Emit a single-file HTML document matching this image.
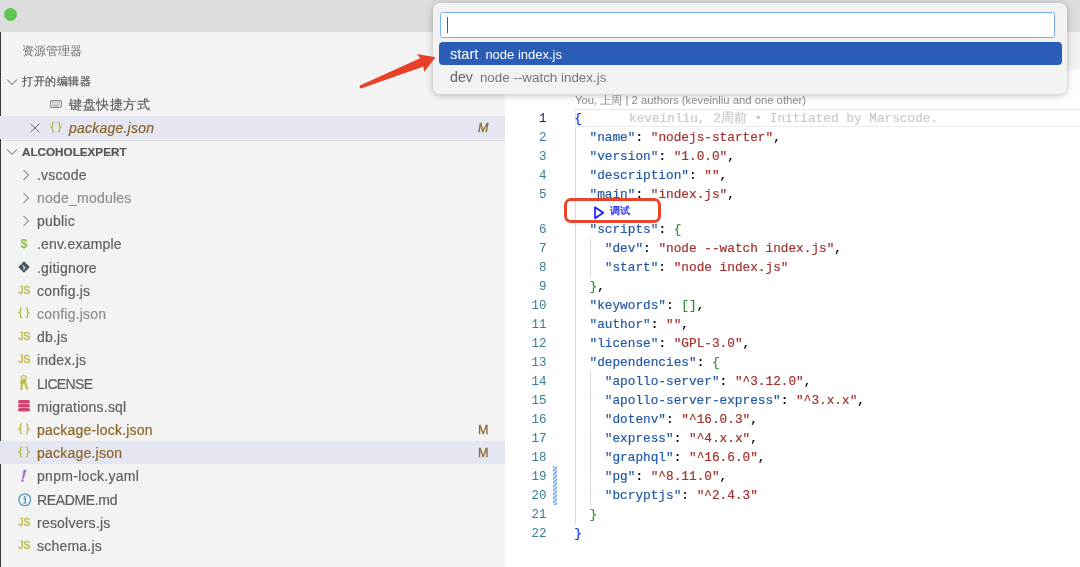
<!DOCTYPE html>
<html><head><meta charset="utf-8"><style>
*{margin:0;padding:0;box-sizing:border-box}
html,body{width:1080px;height:567px;overflow:hidden;background:#fff;font-family:"Liberation Sans",sans-serif;position:relative}
body{will-change:transform}
.a{position:absolute}
.row{position:absolute;left:0;width:505px;height:23.2px;line-height:23.2px;font-size:14px;color:#616161;white-space:nowrap;letter-spacing:0.22px;-webkit-text-stroke:0.2px currentColor}
.row .t{position:absolute;left:37px;top:1.4px}
.row .ic{position:absolute}
.sel{background:#e4e6f1}
.m{position:absolute;left:478px;top:1px;color:#8b6a35;font-style:italic;font-size:12.5px;-webkit-text-stroke:0.3px #8b6a35}
.cl{position:absolute;left:574.2px;height:19px;line-height:19px;padding-top:0.6px;font-family:"Liberation Mono",monospace;font-size:12.75px;white-space:pre;color:#000;-webkit-text-stroke:0.18px currentColor}
.ln{position:absolute;left:505px;width:41.5px;text-align:right;height:19px;line-height:19px;padding-top:1.5px;font-family:"Liberation Mono",monospace;font-size:12.5px;color:#3a7d96}
.k{color:#2158a6}.s{color:#a3302c}.b1{color:#0431fa}.b2{color:#319331}
.ig{position:absolute;width:1px;background:#d9d9d9}
</style></head><body>
<div class="a" style="left:0;top:0;width:1080px;height:32.3px;background:#dddddd"></div>
<div class="a" style="left:4px;top:8px;width:13px;height:13px;border-radius:50%;background:#61c554"></div>
<div class="a" style="left:0;top:32px;width:505px;height:535px;background:#f3f3f3"></div>
<div class="a" style="left:0;top:32px;width:1px;height:535px;background:#3a3a3a"></div>
<div class="a" style="left:505px;top:32px;width:575px;height:38px;background:#f3f3f3"></div>
<div class="a" style="left:22px;top:43px;font-size:11.5px;color:#6f6f6f;line-height:16px;white-space:nowrap">资源管理器</div>
<div class="row" style="top:69.7px;font-size:11px;color:#555;letter-spacing:0.55px;-webkit-text-stroke:0.2px #555"><span class="t" style="left:22px;top:0.6px">打开的编辑器</span></div>
<svg class="a" style="left:5.5px;top:77.5px" width="12" height="8" viewBox="0 0 12 8"><path d="M1 1.5 L6 6.5 L11 1.5" fill="none" stroke="#5a5a5a" stroke-width="1"/></svg>
<div class="row" style="top:92.9px;font-size:13px;letter-spacing:0.6px"><span class="t" style="left:69px;top:0.6px">键盘快捷方式</span></div>
<svg class="a" style="left:50px;top:100px" width="12" height="8" viewBox="0 0 12 8"><rect x="0.6" y="0.6" width="10.8" height="6.8" rx="1.2" fill="none" stroke="#8c8c8c" stroke-width="1.1"/><path d="M2.2 2.6h1.2M4.4 2.6h1.2M6.6 2.6h1.2M8.6 2.6h1.2M2.2 4.2h1.2M4.4 4.2h1.2M6.6 4.2h1.2M8.6 4.2h1.2M3.2 5.7h5.6" stroke="#9a9a9a" stroke-width="0.9"/></svg>
<div class="row sel" style="top:116.1px"><span class="t" style="left:69px;color:#8b6326;font-style:italic">package.json</span><span class="m">M</span></div>
<svg class="a" style="left:29.8px;top:122.8px" width="10" height="10" viewBox="0 0 10 10"><path d="M0.6 0.6 L9.4 9.4 M9.4 0.6 L0.6 9.4" stroke="#6a6a6a" stroke-width="1"/></svg>
<svg class="a" style="left:50px;top:121px" width="12" height="12" viewBox="0 0 12 12"><path d="M4.3 0.9 Q2.5 0.9 2.5 2.6 V4.7 L0.8 5.9 L2.5 7.1 V9.2 Q2.5 10.9 4.3 10.9 M7.7 0.9 Q9.5 0.9 9.5 2.6 V4.7 L11.2 5.9 L9.5 7.1 V9.2 Q9.5 10.9 7.7 10.9" fill="none" stroke="#bbbd4a" stroke-width="1.35" stroke-linejoin="round"/></svg>
<div class="a" style="left:1px;top:139.8px;width:504px;height:1px;background:#d9d9de"></div>
<div class="row" style="top:139.3px;font-size:11.7px;font-weight:bold;color:#555;letter-spacing:0"><span class="t" style="left:22px;top:1px">ALCOHOLEXPERT</span></div>
<svg class="a" style="left:5.5px;top:147.5px" width="12" height="8" viewBox="0 0 12 8"><path d="M1 1.5 L6 6.5 L11 1.5" fill="none" stroke="#5a5a5a" stroke-width="1"/></svg>
<div class="row" style="top:162.5px"><span class="t">.vscode</span></div>
<svg class="a" style="left:22px;top:168.8px" width="8" height="12" viewBox="0 0 8 12"><path d="M1.5 1 L6.5 6 L1.5 11" fill="none" stroke="#5a5a5a" stroke-width="1"/></svg>
<div class="row" style="top:185.7px"><span class="t" style="color:#8e8e8e">node_modules</span></div>
<svg class="a" style="left:22px;top:192.00000000000003px" width="8" height="12" viewBox="0 0 8 12"><path d="M1.5 1 L6.5 6 L1.5 11" fill="none" stroke="#5a5a5a" stroke-width="1"/></svg>
<div class="row" style="top:208.9px"><span class="t">public</span></div>
<svg class="a" style="left:22px;top:215.20000000000002px" width="8" height="12" viewBox="0 0 8 12"><path d="M1.5 1 L6.5 6 L1.5 11" fill="none" stroke="#5a5a5a" stroke-width="1"/></svg>
<div class="row" style="top:232.1px"><span class="t">.env.example</span></div>
<div class="a" style="left:20.5px;top:237.9px;font-size:12.5px;line-height:12px;color:#8dc149;font-weight:bold">$</div>
<div class="row" style="top:255.3px"><span class="t">.gitignore</span></div>
<svg class="a" style="left:18px;top:260.6px" width="12" height="12" viewBox="0 0 12 12"><path d="M6 0.3 L11.7 6 L6 11.7 L0.3 6 Z" fill="#41535b"/><path d="M4 3.5 L7.5 7 M6 5.5 V9" stroke="#f3f3f3" stroke-width="1"/></svg>
<div class="row" style="top:278.5px"><span class="t">config.js</span></div>
<div class="a" style="left:18.5px;top:285.8px;font-size:10px;line-height:10px;color:#b9b948;white-space:pre;letter-spacing:0.1px;-webkit-text-stroke:0.45px #b9b948">JS</div>
<div class="row" style="top:301.7px"><span class="t" style="color:#8e8e8e">config.json</span></div>
<svg class="a" style="left:18px;top:307.20000000000005px" width="12" height="12" viewBox="0 0 12 12"><path d="M4.3 0.9 Q2.5 0.9 2.5 2.6 V4.7 L0.8 5.9 L2.5 7.1 V9.2 Q2.5 10.9 4.3 10.9 M7.7 0.9 Q9.5 0.9 9.5 2.6 V4.7 L11.2 5.9 L9.5 7.1 V9.2 Q9.5 10.9 7.7 10.9" fill="none" stroke="#bbbd4a" stroke-width="1.35" stroke-linejoin="round"/></svg>
<div class="row" style="top:324.9px"><span class="t">db.js</span></div>
<div class="a" style="left:18.5px;top:332.2px;font-size:10px;line-height:10px;color:#b9b948;white-space:pre;letter-spacing:0.1px;-webkit-text-stroke:0.45px #b9b948">JS</div>
<div class="row" style="top:348.1px"><span class="t">index.js</span></div>
<div class="a" style="left:18.5px;top:355.40000000000003px;font-size:10px;line-height:10px;color:#b9b948;white-space:pre;letter-spacing:0.1px;-webkit-text-stroke:0.45px #b9b948">JS</div>
<div class="row" style="top:371.3px"><span class="t" style="letter-spacing:-0.65px">LICENSE</span></div>
<svg class="a" style="left:19px;top:374.8px" width="10" height="16" viewBox="0 0 10 16"><ellipse cx="4.8" cy="2.6" rx="2.5" ry="1.9" fill="none" stroke="#bcbd42" stroke-width="1.2"/><circle cx="3.2" cy="6.9" r="2.2" fill="#bcbd42"/><circle cx="5.6" cy="6.2" r="1.8" fill="#bcbd42"/><path d="M3 7.5 L2.4 14.2 M5.6 6.8 L8.1 13.4" fill="none" stroke="#bcbd42" stroke-width="2.1" stroke-linecap="round"/></svg>
<div class="row" style="top:394.5px"><span class="t">migrations.sql</span></div>
<svg class="a" style="left:18px;top:399.8px" width="12" height="12" viewBox="0 0 12 12"><rect x="0" y="0" width="12" height="3.6" rx="1.8" fill="#d6426e"/><rect x="0" y="4.1" width="12" height="3.4" rx="1.7" fill="#d6426e"/><rect x="0" y="8.1" width="12" height="3.5" rx="1.75" fill="#d6426e"/></svg>
<div class="row" style="top:417.7px"><span class="t" style="color:#8b6326">package-lock.json</span><span class="m" style="font-style:normal">M</span></div>
<svg class="a" style="left:18px;top:423.2px" width="12" height="12" viewBox="0 0 12 12"><path d="M4.3 0.9 Q2.5 0.9 2.5 2.6 V4.7 L0.8 5.9 L2.5 7.1 V9.2 Q2.5 10.9 4.3 10.9 M7.7 0.9 Q9.5 0.9 9.5 2.6 V4.7 L11.2 5.9 L9.5 7.1 V9.2 Q9.5 10.9 7.7 10.9" fill="none" stroke="#bbbd4a" stroke-width="1.35" stroke-linejoin="round"/></svg>
<div class="row sel" style="top:440.9px"><span class="t" style="color:#8b6326">package.json</span><span class="m" style="font-style:normal">M</span></div>
<svg class="a" style="left:18px;top:446.4px" width="12" height="12" viewBox="0 0 12 12"><path d="M4.3 0.9 Q2.5 0.9 2.5 2.6 V4.7 L0.8 5.9 L2.5 7.1 V9.2 Q2.5 10.9 4.3 10.9 M7.7 0.9 Q9.5 0.9 9.5 2.6 V4.7 L11.2 5.9 L9.5 7.1 V9.2 Q9.5 10.9 7.7 10.9" fill="none" stroke="#bbbd4a" stroke-width="1.35" stroke-linejoin="round"/></svg>
<div class="row" style="top:464.1px"><span class="t" style="letter-spacing:0.3px">pnpm-lock.yaml</span></div>
<svg class="a" style="left:20px;top:469.0px" width="8" height="14" viewBox="0 0 8 14"><path d="M3.7 1 L6.3 1 L3.6 9.5 L2.3 9.5 Z" fill="#a074c4" stroke="#a074c4" stroke-width="0.5" stroke-linejoin="round"/><circle cx="2.5" cy="11.6" r="1.3" fill="#a074c4"/></svg>
<div class="row" style="top:487.3px"><span class="t" style="letter-spacing:-0.35px">README.md</span></div>
<svg class="a" style="left:17.5px;top:492.8px" width="13.5" height="13.5" viewBox="0 0 14 14"><circle cx="7" cy="7" r="6.1" fill="none" stroke="#519aba" stroke-width="1.4"/><circle cx="7" cy="3.9" r="1" fill="#519aba"/><path d="M5.6 5.8 H7.6 V10.2 M5.4 10.3 H8.6" fill="none" stroke="#519aba" stroke-width="1.4"/></svg>
<div class="row" style="top:510.5px"><span class="t">resolvers.js</span></div>
<div class="a" style="left:18.5px;top:517.8px;font-size:10px;line-height:10px;color:#b9b948;white-space:pre;letter-spacing:0.1px;-webkit-text-stroke:0.45px #b9b948">JS</div>
<div class="row" style="top:533.7px"><span class="t">schema.js</span></div>
<div class="a" style="left:18.5px;top:541.0px;font-size:10px;line-height:10px;color:#b9b948;white-space:pre;letter-spacing:0.1px;-webkit-text-stroke:0.45px #b9b948">JS</div>
<div class="a" style="left:575px;top:109.3px;width:505px;height:17.6px;border:1px solid #eaeaea;border-right:none"></div>
<div class="a" style="left:575px;top:93px;font-size:11.3px;line-height:14px;color:#8a8a8a;white-space:nowrap">You, 上周 | 2 authors (keveinliu and one other)</div>
<div class="ig" style="left:575px;top:127.5px;height:396.0px"></div>
<div class="ig" style="left:590px;top:238.5px;height:38.0px"></div>
<div class="ig" style="left:590px;top:371.5px;height:133.0px"></div>
<div class="ln" style="top:108.5px;color:#0b216f">1</div>
<div class="cl" style="top:108.5px"><span class="b1">{</span></div>
<div class="ln" style="top:127.5px;color:#3a7d96">2</div>
<div class="cl" style="top:127.5px">  <span class="k">"name"</span>: <span class="s">"nodejs-starter"</span>,</div>
<div class="ln" style="top:146.5px;color:#3a7d96">3</div>
<div class="cl" style="top:146.5px">  <span class="k">"version"</span>: <span class="s">"1.0.0"</span>,</div>
<div class="ln" style="top:165.5px;color:#3a7d96">4</div>
<div class="cl" style="top:165.5px">  <span class="k">"description"</span>: <span class="s">""</span>,</div>
<div class="ln" style="top:184.5px;color:#3a7d96">5</div>
<div class="cl" style="top:184.5px">  <span class="k">"main"</span>: <span class="s">"index.js"</span>,</div>
<div class="ln" style="top:219.5px;color:#3a7d96">6</div>
<div class="cl" style="top:219.5px">  <span class="k">"scripts"</span>: <span class="b2">{</span></div>
<div class="ln" style="top:238.5px;color:#3a7d96">7</div>
<div class="cl" style="top:238.5px">    <span class="k">"dev"</span>: <span class="s">"node --watch index.js"</span>,</div>
<div class="ln" style="top:257.5px;color:#3a7d96">8</div>
<div class="cl" style="top:257.5px">    <span class="k">"start"</span>: <span class="s">"node index.js"</span></div>
<div class="ln" style="top:276.5px;color:#3a7d96">9</div>
<div class="cl" style="top:276.5px">  <span class="b2">}</span>,</div>
<div class="ln" style="top:295.5px;color:#3a7d96">10</div>
<div class="cl" style="top:295.5px">  <span class="k">"keywords"</span>: <span class="b2">[]</span>,</div>
<div class="ln" style="top:314.5px;color:#3a7d96">11</div>
<div class="cl" style="top:314.5px">  <span class="k">"author"</span>: <span class="s">""</span>,</div>
<div class="ln" style="top:333.5px;color:#3a7d96">12</div>
<div class="cl" style="top:333.5px">  <span class="k">"license"</span>: <span class="s">"GPL-3.0"</span>,</div>
<div class="ln" style="top:352.5px;color:#3a7d96">13</div>
<div class="cl" style="top:352.5px">  <span class="k">"dependencies"</span>: <span class="b2">{</span></div>
<div class="ln" style="top:371.5px;color:#3a7d96">14</div>
<div class="cl" style="top:371.5px">    <span class="k">"apollo-server"</span>: <span class="s">"^3.12.0"</span>,</div>
<div class="ln" style="top:390.5px;color:#3a7d96">15</div>
<div class="cl" style="top:390.5px">    <span class="k">"apollo-server-express"</span>: <span class="s">"^3.x.x"</span>,</div>
<div class="ln" style="top:409.5px;color:#3a7d96">16</div>
<div class="cl" style="top:409.5px">    <span class="k">"dotenv"</span>: <span class="s">"^16.0.3"</span>,</div>
<div class="ln" style="top:428.5px;color:#3a7d96">17</div>
<div class="cl" style="top:428.5px">    <span class="k">"express"</span>: <span class="s">"^4.x.x"</span>,</div>
<div class="ln" style="top:447.5px;color:#3a7d96">18</div>
<div class="cl" style="top:447.5px">    <span class="k">"graphql"</span>: <span class="s">"^16.6.0"</span>,</div>
<div class="ln" style="top:466.5px;color:#3a7d96">19</div>
<div class="cl" style="top:466.5px">    <span class="k">"pg"</span>: <span class="s">"^8.11.0"</span>,</div>
<div class="ln" style="top:485.5px;color:#3a7d96">20</div>
<div class="cl" style="top:485.5px">    <span class="k">"bcryptjs"</span>: <span class="s">"^2.4.3"</span></div>
<div class="ln" style="top:504.5px;color:#3a7d96">21</div>
<div class="cl" style="top:504.5px">  <span class="b2">}</span></div>
<div class="ln" style="top:523.5px;color:#3a7d96">22</div>
<div class="cl" style="top:523.5px"><span class="b1">}</span></div>
<div class="cl" style="left:629px;top:108.5px;color:#c9c9c9">keveinliu, 2周前 • Initiated by Marscode.</div>
<svg class="a" style="left:593px;top:205px" width="12" height="15" viewBox="0 0 12 15"><path d="M2 2.2 L10.3 7.7 L2 13.3 Z" fill="none" stroke="#1b1bff" stroke-width="1.7" stroke-linejoin="round"/></svg>
<div class="a" style="left:609.5px;top:204px;font-size:10px;line-height:14px;color:#3535f5;font-weight:bold;white-space:nowrap">调试</div>
<div class="a" style="left:563.5px;top:198px;width:97.5px;height:24.5px;border:3px solid #e8452c;border-radius:7px"></div>
<svg class="a" style="left:552.5px;top:466px" width="4" height="39" viewBox="0 0 4 39"><defs><pattern id="hp" width="2.8" height="2.8" patternUnits="userSpaceOnUse" patternTransform="rotate(45)"><rect width="1.5" height="2.8" fill="#5d97e2"/></pattern></defs><rect width="4" height="39" fill="url(#hp)"/></svg>
<div class="a" style="left:433px;top:3px;width:634px;height:90.5px;background:#f2f2f2;border-radius:7px;box-shadow:0 1px 7px rgba(0,0,0,.28)"></div>
<div class="a" style="left:439.7px;top:12px;width:615.8px;height:26px;background:#fff;border:1.5px solid #7aaef0;border-radius:2.5px"></div>
<div class="a" style="left:447px;top:17px;width:1px;height:16px;background:#555"></div>
<div class="a" style="left:438.5px;top:42.2px;width:623.3px;height:22.8px;background:#2a5db8;border-radius:4px"></div>
<div class="a" style="left:450px;top:43.8px;line-height:20px;font-size:14.6px;color:#fff;white-space:nowrap">start<span style="font-size:13px;margin-left:7px">node index.js</span></div>
<div class="a" style="left:450px;top:67px;line-height:20px;font-size:14.2px;color:#666;white-space:nowrap">dev<span style="font-size:13.4px;margin-left:7px;color:#777">node --watch index.js</span></div>
<svg class="a" style="left:350px;top:45px" width="95" height="50" viewBox="350 45 95 50"><path d="M360.4 85.3 L420.1 58.3 L417 54.1 L435.5 57.3 L424.1 71.9 L423.5 66.6 L361.6 88.3 Q360 88.8 359.6 87.3 Q359.4 85.9 360.4 85.3 Z" fill="#e8402a"/></svg>
</body></html>
